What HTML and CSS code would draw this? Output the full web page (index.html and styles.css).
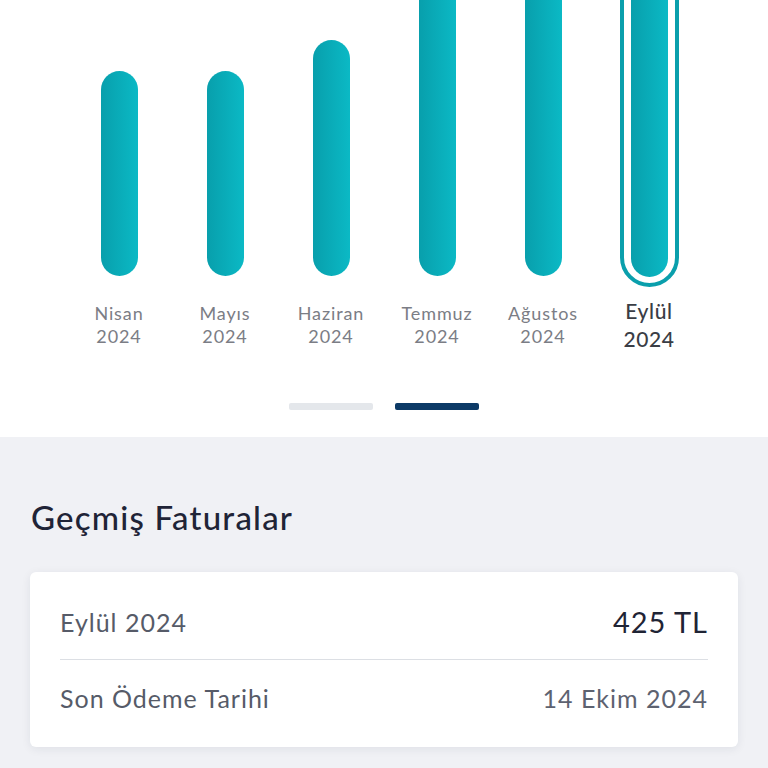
FILE: index.html
```html
<!DOCTYPE html>
<html lang="tr">
<head>
  <meta charset="UTF-8">
  <meta name="viewport" content="width=device-width, initial-scale=1">
  <title>Faturalar</title>
  <link rel="stylesheet" href="styles.css">
</head>
<body>
  <section class="chart-section">
    <div class="chart">
      <div class="col">
        <div class="bar-area"><div class="bar" style="height: 205px"></div></div>
        <div class="label">Nisan<br>2024</div>
      </div>
      <div class="col">
        <div class="bar-area"><div class="bar" style="height: 205px"></div></div>
        <div class="label">Mayıs<br>2024</div>
      </div>
      <div class="col">
        <div class="bar-area"><div class="bar" style="height: 236px"></div></div>
        <div class="label">Haziran<br>2024</div>
      </div>
      <div class="col">
        <div class="bar-area"><div class="bar" style="height: 320px"></div></div>
        <div class="label">Temmuz<br>2024</div>
      </div>
      <div class="col">
        <div class="bar-area"><div class="bar" style="height: 320px"></div></div>
        <div class="label">Ağustos<br>2024</div>
      </div>
      <div class="col selected">
        <div class="bar-area">
          <div class="ring"><div class="bar" style="height: 320px"></div></div>
        </div>
        <div class="label">Eylül<br>2024</div>
      </div>
    </div>
    <div class="pager">
      <span class="dot"></span>
      <span class="dot active"></span>
    </div>
  </section>

  <section class="history">
    <h2>Geçmiş Faturalar</h2>
    <div class="card">
      <div class="row">
        <span class="row-label">Eylül 2024</span>
        <span class="amount">425 TL</span>
      </div>
      <div class="row">
        <span class="row-label">Son Ödeme Tarihi</span>
        <span class="date">14 Ekim 2024</span>
      </div>
    </div>
  </section>
</body>
</html>
```

FILE: styles.css
```css
body {
  margin: 0;
  font-family: "Lato", "Open Sans", sans-serif;
  background-color: #f0f1f5;
  height: 768px;
  overflow: hidden;
}

/* grafik */
.chart-section {
  background-color: #ffffff;
  height: 437px;
}
.chart {
  display: flex;
  padding-left: 66px;
}
.col {
  width: 106px;
  display: flex;
  flex-direction: column;
  align-items: center;
}
.bar-area {
  height: 287px;
  overflow: hidden;
  display: flex;
  align-items: flex-end;
  justify-content: center;
}
.bar {
  width: 37px;
  border-radius: 19px;
  background: linear-gradient(to right, #089fac, #0bb9c5);
  margin-bottom: 11px;
}
.ring {
  border: 4px solid #0a9fac;
  border-radius: 30px;
  padding: 0 7px 6px;
  display: flex;
}
.ring .bar {
  margin-bottom: 0;
}
.label {
  margin-top: 15px;
  font-size: 18px;
  line-height: 23px;
  letter-spacing: 0.9px;
  color: #7b7d85;
  text-align: center;
}
.selected .label {
  margin-top: 10px;
  font-size: 21px;
  line-height: 28px;
  letter-spacing: 0.6px;
  font-weight: 500;
  color: #3a3d45;
}

.pager {
  display: flex;
  justify-content: center;
  gap: 22px;
  margin-top: 50px;
}
.dot {
  width: 84px;
  height: 7px;
  border-radius: 2px;
  background-color: #e4e7eb;
}
.dot.active {
  background-color: #0c3a66;
}

/* geçmiş faturalar */
.history {
  padding: 0 30px;
}
.history h2 {
  margin: 0;
  padding: 60px 0 0 1px;
  height: 75px;
  font-size: 33px;
  line-height: 40px;
  letter-spacing: 1.2px;
  font-weight: 500;
  color: #1f2437;
}
.card {
  background-color: #ffffff;
  border-radius: 6px;
  padding: 12px 30px;
  box-shadow: 0 2px 10px rgba(30, 40, 70, 0.08);
}
.row {
  height: 75px;
  display: flex;
  align-items: center;
  justify-content: space-between;
}
.row + .row {
  border-top: 1px solid #dcdfe4;
}
.row-label {
  font-size: 25px;
  letter-spacing: 1px;
  color: #565b68;
}
.amount {
  font-size: 29px;
  letter-spacing: 1px;
  color: #1f2435;
}
.date {
  font-size: 25px;
  letter-spacing: 1px;
  color: #5d6270;
}
```
